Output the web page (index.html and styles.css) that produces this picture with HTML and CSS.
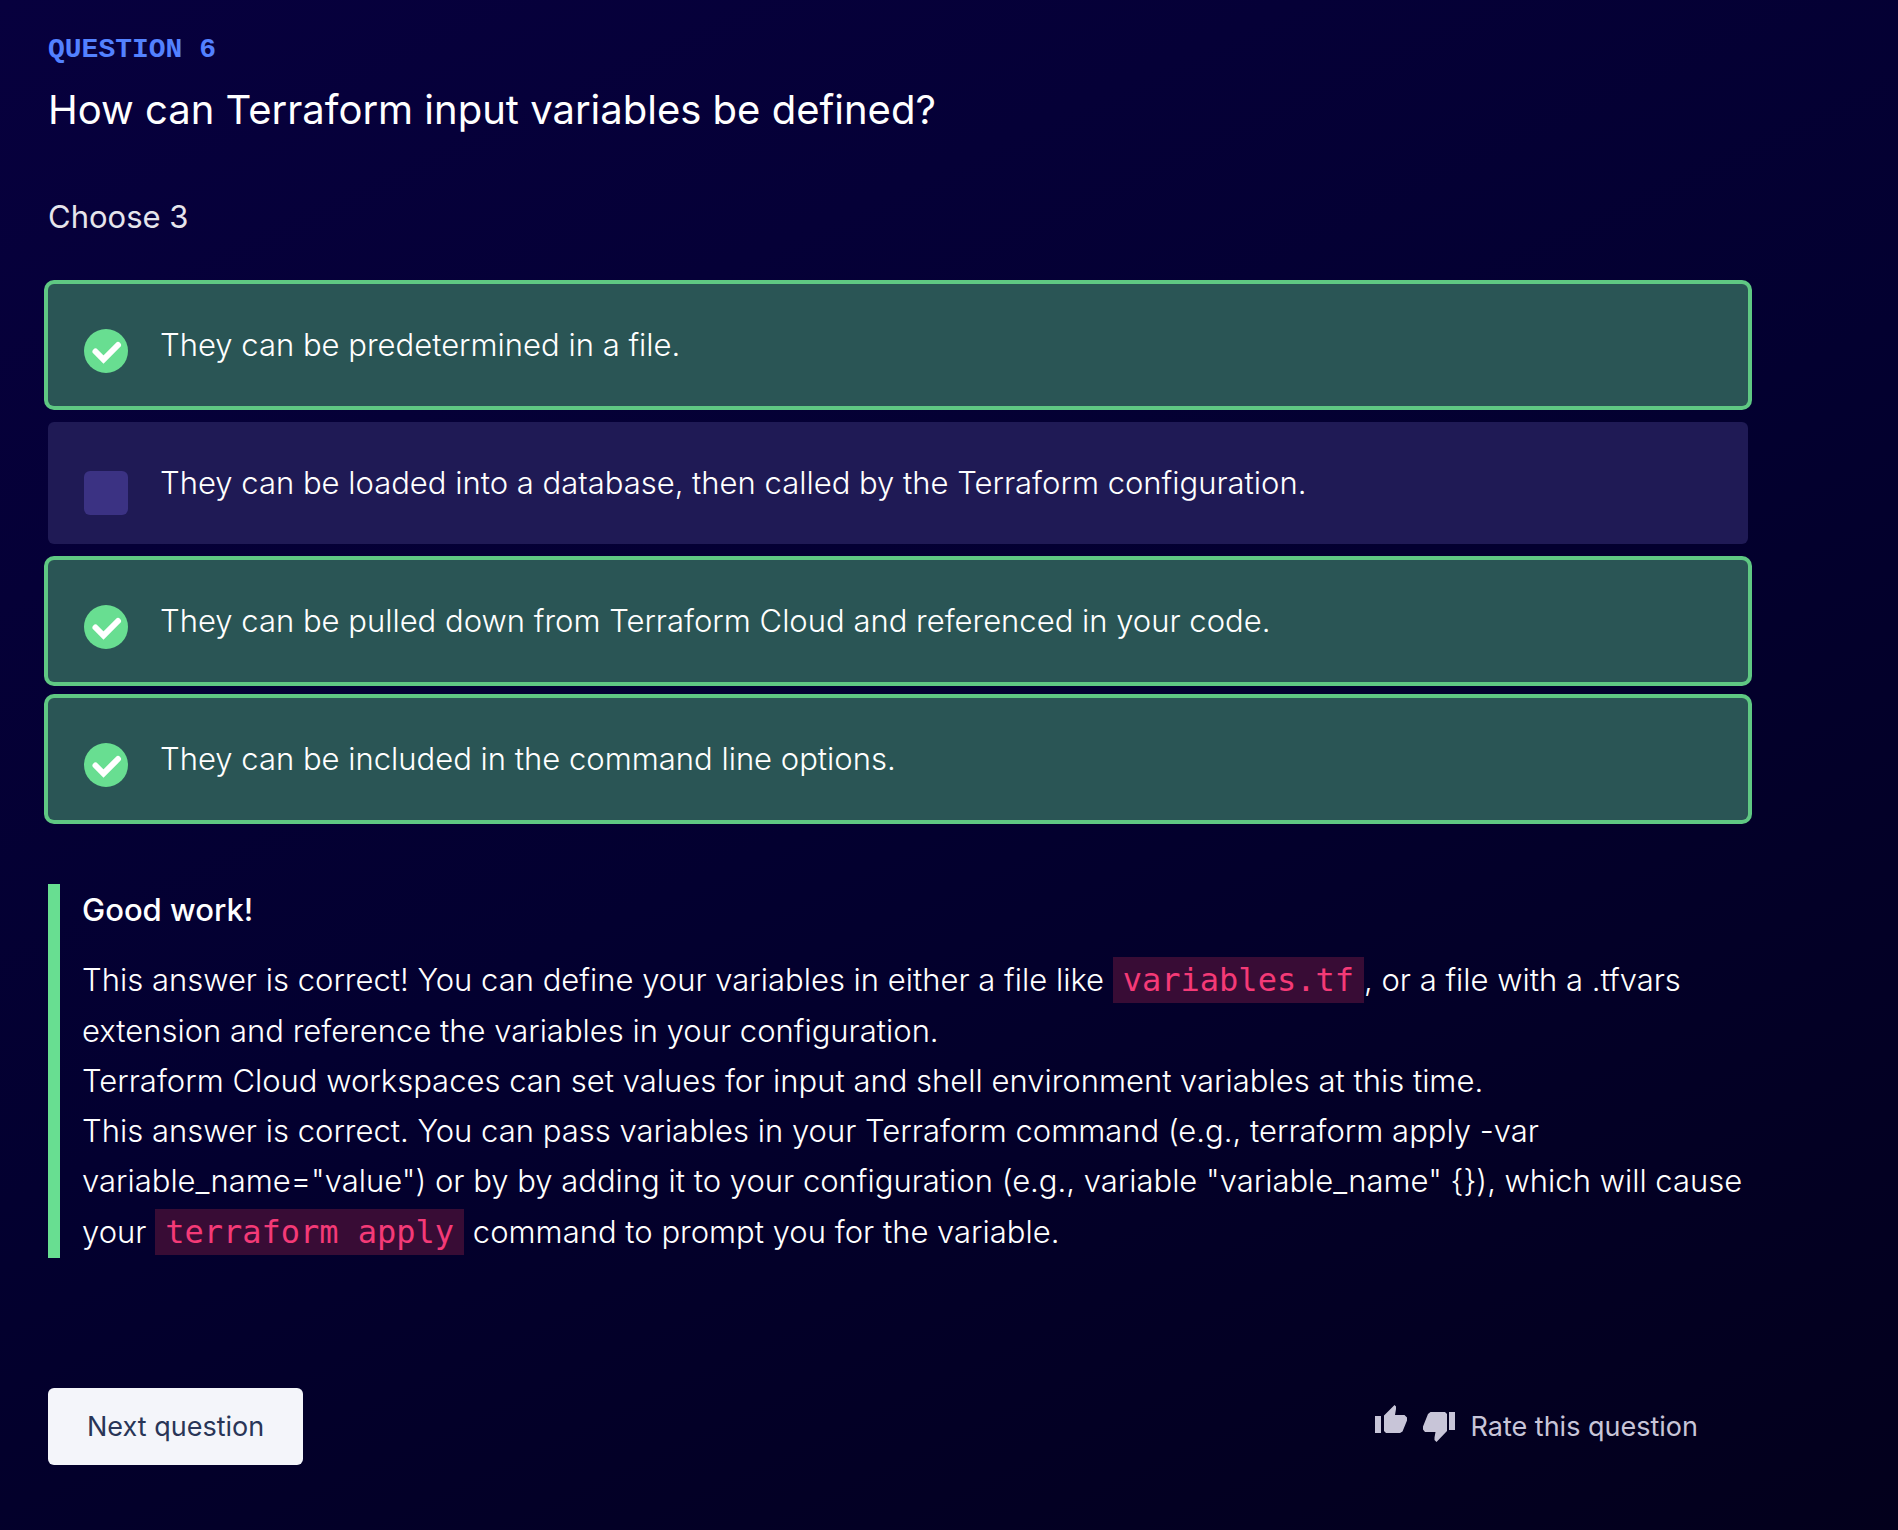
FILE: index.html
```html
<!DOCTYPE html>
<html lang="en">
<head>
  <meta charset="utf-8">
  <meta name="viewport" content="width=device-width, initial-scale=1">
  <title>Question 6</title>
  <link rel="stylesheet" href="styles.css">
</head>
<body>
  <main class="quiz">
    <header class="quiz-header">
      <p class="eyebrow">QUESTION 6</p>
      <h1 class="title">How can Terraform input variables be defined?</h1>
    </header>

    <form class="quiz-form">
      <fieldset class="options">
        <legend class="hint">Choose 3</legend>
        <label class="option option-correct">
          <input class="option-input" type="checkbox" name="answer" checked>
          <svg class="check" viewBox="0 0 44 44" aria-hidden="true"><circle cx="22" cy="22" r="22"/><path d="M11.5 22.500l8 8L34 16"/></svg>
          <span class="option-text">They can be predetermined in a file.</span>
        </label>
        <label class="option">
          <input class="option-input" type="checkbox" name="answer">
          <span class="box"></span>
          <span class="option-text">They can be loaded into a database, then called by the Terraform configuration.</span>
        </label>
        <label class="option option-correct">
          <input class="option-input" type="checkbox" name="answer" checked>
          <svg class="check" viewBox="0 0 44 44" aria-hidden="true"><circle cx="22" cy="22" r="22"/><path d="M11.5 22.500l8 8L34 16"/></svg>
          <span class="option-text">They can be pulled down from Terraform Cloud and referenced in your code.</span>
        </label>
        <label class="option option-correct">
          <input class="option-input" type="checkbox" name="answer" checked>
          <svg class="check" viewBox="0 0 44 44" aria-hidden="true"><circle cx="22" cy="22" r="22"/><path d="M11.5 22.500l8 8L34 16"/></svg>
          <span class="option-text">They can be included in the command line options.</span>
        </label>
      </fieldset>

      <section class="feedback">
        <h2 class="feedback-title">Good work!</h2>
        <p class="feedback-text">This answer is correct! You can define your variables in either a file like <code class="code">variables.tf</code>, or a file with a .tfvars extension and reference the variables in your configuration.</p>
        <p class="feedback-text">Terraform Cloud workspaces can set values for input and shell environment variables at this time.</p>
        <p class="feedback-text">This answer is correct. You can pass variables in your Terraform command (e.g., terraform apply -var variable_name="value") or by by adding it to your configuration (e.g., variable "variable_name" {}), which will cause your <code class="code">terraform apply</code> command to prompt you for the variable.</p>
      </section>

      <footer class="actions">
        <button class="next" type="button">Next question</button>
        <div class="rate">
          <button class="thumb thumb-up" type="button" aria-label="Like">
            <svg viewBox="0 0 32 28" aria-hidden="true"><path d="M0 11h6v17H0zM9 10.500L19.500 0l1.500 1.500v2.500L20 10h9.500L32 12.500v3L27.500 26.500 25 28H11l-2-2z"/></svg>
          </button>
          <button class="thumb thumb-down" type="button" aria-label="Dislike">
            <svg viewBox="0 0 32 30" aria-hidden="true"><path d="M26 0h6v18h-6zM24 19L13.500 30l-2-2v-2.500L12.500 20H2l-2-2.500v-3L5 2 7.500 0H22l2 2z"/></svg>
          </button>
          <span class="rate-text">Rate this question</span>
        </div>
      </footer>
    </form>
  </main>
</body>
</html>
```

FILE: styles.css
```css
* {
  box-sizing: border-box;
}

body {
  margin: 0;
  min-height: 100vh;
  background: linear-gradient(155deg, #07003e 0%, #030030 50%, #03001c 100%);
  color: #fff;
  font-family: Inter, "Liberation Sans", sans-serif;
  font-size: 31px;
  font-weight: 300;
  line-height: 50px;
}

h1,
h2,
p {
  margin: 0;
}

.quiz {
  padding: 34px 150px 64px 48px;
}

.eyebrow {
  color: #5381ff;
  font-family: "Courier New", "Liberation Mono", monospace;
  font-size: 28px;
  font-weight: 700;
  line-height: 32px;
}

.title {
  margin-top: 14px;
  font-size: 40px;
  font-weight: 400;
  line-height: 60px;
}

.options {
  display: flex;
  flex-direction: column;
  gap: 16px;
  margin: 52px 0 0;
  padding: 0;
  border: 0;
}

.hint {
  margin-bottom: 42px;
  padding: 0;
  color: #e6e5ec;
  font-weight: 400;
  line-height: 50px;
}

.option {
  display: flex;
  align-items: flex-start;
  gap: 32px;
  min-height: 122px;
  padding: 36px 36px 28px;
  border-radius: 6px;
  background: #1f1a55;
}

.option-correct {
  background: #2a5555;
  box-shadow: 0 0 0 4px #5fc883;
}

.option-input {
  position: absolute;
  opacity: 0;
}

.check,
.box {
  flex: none;
  width: 44px;
  height: 44px;
  margin-top: 9px;
}

.box {
  margin-top: 13px;
  border-radius: 6px;
  background: #3b3283;
}

.check circle {
  fill: #68de91;
}

.check path {
  fill: none;
  stroke: #fff;
  stroke-linecap: round;
  stroke-width: 6;
}

.feedback {
  margin-top: 64px;
  padding-left: 22px;
  border-left: 12px solid #68de91;
}

.feedback-title {
  margin-bottom: 18px;
  font-size: 31px;
  font-weight: 500;
  line-height: 52px;
}

.code {
  padding: 4px 10px;
  background: #380c35;
  color: #f43a77;
  font-family: "DejaVu Sans Mono", monospace;
  font-size: 32px;
  line-height: 52px;
}

.actions {
  display: flex;
  align-items: center;
  justify-content: space-between;
  margin-top: 130px;
  padding-right: 50px;
}

.next {
  padding: 18px 39px;
  border: 0;
  border-radius: 6px;
  background: #f4f5fa;
  color: #293557;
  font: inherit;
  font-size: 27px;
  font-weight: 400;
  line-height: 41px;
}

.rate {
  display: flex;
  align-items: center;
  gap: 16px;
  color: #c8c5d8;
  font-size: 27px;
  font-weight: 400;
}

.thumb {
  display: flex;
  width: 32px;
  padding: 0;
  border: 0;
  background: none;
  color: inherit;
}

.thumb svg {
  width: 32px;
  fill: currentColor;
}

.thumb-up {
  margin-bottom: 16px;
}
```
